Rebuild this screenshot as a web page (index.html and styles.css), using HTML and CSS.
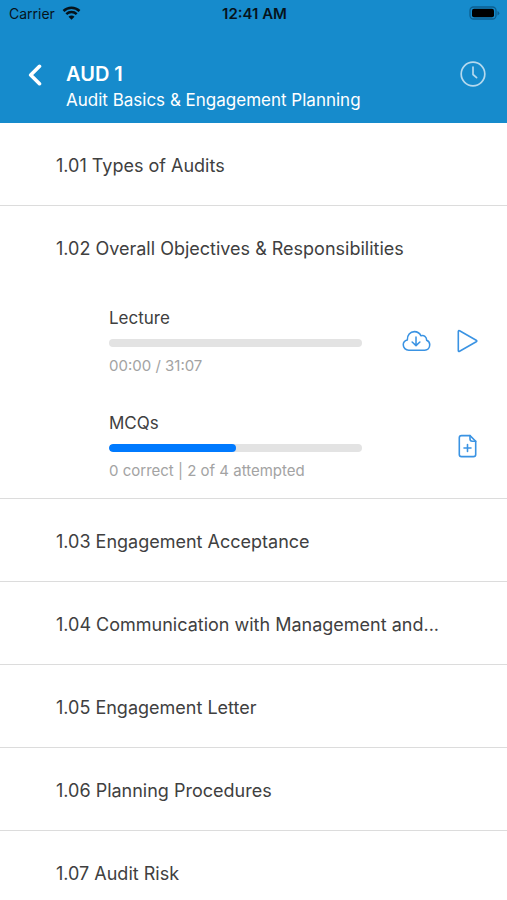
FILE: index.html
```html
<!DOCTYPE html>
<html lang="en">
<head>
    <meta charset="UTF-8">
    <meta name="viewport" content="width=device-width, initial-scale=1.0">
    <title>AUD 1</title>
    <link rel="stylesheet" href="styles.css">
</head>
<body>
    <header class="header">
        <div class="status-bar">
            <div class="carrier">
                <span>Carrier</span>
                <svg width="19" height="14" viewBox="0 0 18 14">
                    <path d="M1 5a11.5 11.5 0 0 1 16 0M3.8 8.2a7.5 7.5 0 0 1 10.4 0" fill="none" stroke="#06131b" stroke-width="2.5"/>
                    <path d="M9 13.8L6 10.7a4.2 4.2 0 0 1 6 0z" fill="#06131b"/>
                </svg>
            </div>
            <span class="time">12:41 AM</span>
            <div class="battery">
                <svg width="31" height="14" viewBox="0 0 31 14">
                    <rect x="1" y="1" width="26" height="12" rx="3.5" fill="none" stroke="#0d5f90" stroke-width="1.3"/>
                    <rect x="3" y="2.7" width="22" height="8.6" rx="2" fill="#000"/>
                    <path d="M28.5 5v4.4q1.8-.8 1.8-2.2t-1.8-2.2z" fill="#0d5f90"/>
                </svg>
            </div>
        </div>
        <div class="nav">
            <button class="icon-button back" aria-label="Back">
                <svg width="14" height="22" viewBox="0 0 14 22" fill="none" stroke="#fff" stroke-width="3.6" stroke-linecap="round" stroke-linejoin="round">
                    <path d="M11.5 2.3L2.7 11l8.8 8.7"/>
                </svg>
            </button>
            <div class="heading">
                <h1>AUD 1</h1>
                <p>Audit Basics &amp; Engagement Planning</p>
            </div>
            <button class="icon-button history" aria-label="History">
                <svg width="26" height="26" viewBox="0 0 26 26" fill="none" stroke="#b5d9ee" stroke-width="1.7" stroke-linecap="round" stroke-linejoin="round">
                    <circle cx="13" cy="13" r="11.8"/>
                    <path d="M13 6v7.5l3.6 3.2"/>
                </svg>
            </button>
        </div>
    </header>

    <main class="topics">
        <section class="topic">
            <h2>1.01 Types of Audits</h2>
        </section>
        <section class="topic">
            <h2>1.02 Overall Objectives &amp; Responsibilities</h2>
            <div class="activity">
                <div class="activity-info">
                    <h3>Lecture</h3>
                    <div class="progress"></div>
                    <p>00:00 / 31:07</p>
                </div>
                <div class="actions">
                    <button class="icon-button" aria-label="Download lecture">
                        <svg width="29" height="22" viewBox="0 0 30 22" fill="none" stroke="#3a93e3" stroke-width="1.6" stroke-linecap="round" stroke-linejoin="round">
                            <path d="M7 20.5C3.8 20.5 1.3 18 1.3 15c0-2.6 1.7-4.6 4.2-5.1C5.2 5 8.5 1.3 12.8 1.3c3.1 0 5.5 1.5 6.7 4.3 3.2-1.1 6 .9 6 4.6 2 .8 3.2 2.5 3.2 4.8 0 3-2.2 5.5-5.2 5.5z"/>
                            <path d="M14.5 7v8.5M10.5 12l4 3.8 4-3.8"/>
                        </svg>
                    </button>
                    <button class="icon-button" aria-label="Play lecture">
                        <svg width="22" height="24" viewBox="0 0 22 24" fill="none" stroke="#3a93e3" stroke-width="1.6" stroke-linejoin="round">
                            <path d="M1.3 2.6v18.8q0 1.5 1.3.8l16.6-9.4q1.3-.8 0-1.6L2.6 1.8q-1.3-.7-1.3.8z"/>
                        </svg>
                    </button>
                </div>
            </div>
            <div class="activity">
                <div class="activity-info">
                    <h3>MCQs</h3>
                    <div class="progress"><div class="progress-fill" style="width: 50%"></div></div>
                    <p>0 correct | 2 of 4 attempted</p>
                </div>
                <div class="actions">
                    <button class="icon-button" aria-label="New question set">
                        <svg width="22" height="24" viewBox="0 0 22 24" fill="none" stroke="#3a93e3" stroke-width="1.6" stroke-linecap="round" stroke-linejoin="round">
                            <path d="M13 1.6H4.5Q2.3 1.6 2.3 3.8v16.6q0 2.2 2.2 2.2h12q2.2 0 2.2-2.2V7.3z"/>
                            <path d="M13 1.6v3.5q0 2.2 2.2 2.2h3.5"/>
                            <path d="M10.5 10.5v7M7 14h7"/>
                        </svg>
                    </button>
                </div>
            </div>
        </section>
        <section class="topic">
            <h2>1.03 Engagement Acceptance</h2>
        </section>
        <section class="topic">
            <h2>1.04 Communication with Management and...</h2>
        </section>
        <section class="topic">
            <h2>1.05 Engagement Letter</h2>
        </section>
        <section class="topic">
            <h2>1.06 Planning Procedures</h2>
        </section>
        <section class="topic">
            <h2>1.07 Audit Risk</h2>
        </section>
    </main>
</body>
</html>
```

FILE: styles.css
```css
* {
    box-sizing: border-box;
}

body {
    margin: 0;
    height: 100vh;
    overflow: hidden;
    background: #fff;
    color: #404040;
    font-family: Inter, "Liberation Sans", sans-serif;
}

h1, h2, h3, p {
    margin: 0;
    font-weight: 400;
}

.header {
    background: #168bcc;
    color: #fff;
    padding-bottom: 11px;
}

.status-bar {
    display: grid;
    grid-template-columns: 1fr auto 1fr;
    align-items: center;
    height: 26px;
    padding: 0 7px 0 9px;
    color: #06131b;
    font-size: 14px;
}

.carrier {
    display: flex;
    align-items: center;
    gap: 7px;
}

.time {
    font-size: 15px;
    font-weight: 600;
}

.battery {
    display: flex;
    justify-content: flex-end;
}

.nav {
    display: flex;
    align-items: flex-start;
    padding: 34px 21px 0 28px;
}

.icon-button {
    display: flex;
    padding: 0;
    border: none;
    background: none;
    cursor: pointer;
}

.back {
    margin-top: 4px;
}

.heading {
    flex: 1;
    padding-left: 24px;
}

.heading h1 {
    font-size: 20px;
    font-weight: 600;
    line-height: 28px;
}

.heading p {
    font-size: 17px;
    line-height: 24px;
}

.history {
    margin-top: 1px;
}

.topic {
    border-bottom: 1px solid #dcdcdc;
}

.topic h2 {
    padding: 31px 56px 27px;
    font-size: 18px;
    line-height: 24px;
    white-space: nowrap;
}

.activity {
    display: flex;
    align-items: center;
    padding: 18px 28px 17px 109px;
}

.activity-info {
    flex: 1;
}

.activity h3 {
    font-size: 17px;
    line-height: 24px;
}

.activity p {
    color: #a3a3a3;
    font-size: 15px;
    line-height: 20px;
}

.progress {
    height: 8px;
    margin: 9px 0;
    border-radius: 4px;
    background: #e3e3e3;
    overflow: hidden;
}

.progress-fill {
    height: 100%;
    border-radius: 4px;
    background: #007aff;
}

.actions {
    display: flex;
    justify-content: flex-end;
    align-items: center;
    gap: 26px;
    width: 117px;
}
```
